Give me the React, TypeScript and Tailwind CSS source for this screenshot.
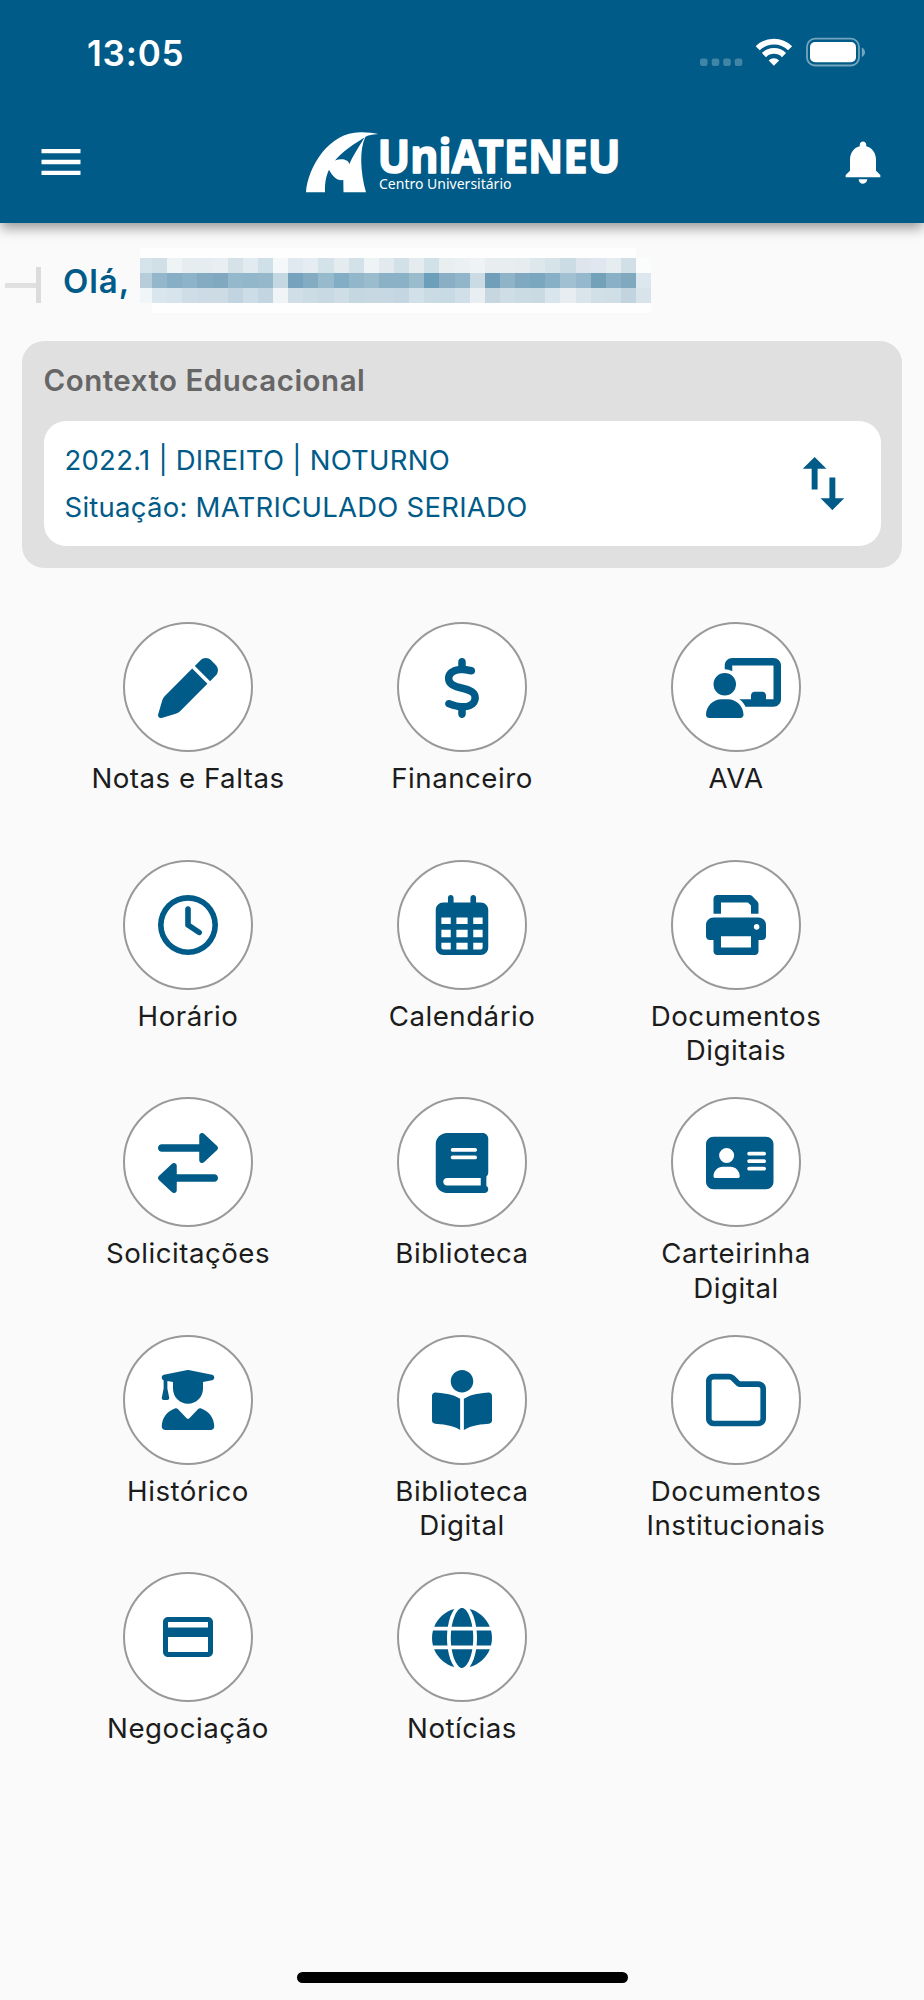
import type { ReactNode } from "react";
import {
  FaAddressCard,
  FaChalkboardUser,
  FaDollarSign,
  FaGlobe,
  FaPen,
  FaRegCalendarDays,
  FaRegClock,
  FaRegFolder,
  FaUserGraduate,
} from "react-icons/fa6";
import { MdMenu, MdNotifications, MdSwapVert } from "react-icons/md";

type IconProps = { className?: string };

function PrintIcon({ className }: IconProps) {
  return (
    <svg className={className} viewBox="0 0 512 512" fill="currentColor">
      <path d="M448 192H64C28.65 192 0 220.7 0 256v96c0 17.67 14.33 32 32 32h32v96c0 17.67 14.33 32 32 32h320c17.67 0 32-14.33 32-32v-96h32c17.67 0 32-14.33 32-32V256C512 220.7 483.3 192 448 192zM384 448H128v-96h256V448zM432 296c-13.25 0-24-10.75-24-24c0-13.27 10.75-24 24-24s24 10.73 24 24C456 285.3 445.3 296 432 296zM128 64h229.5L384 90.51V160h64V77.25c0-8.484-3.375-16.62-9.375-22.62l-45.25-45.25C387.4 3.375 379.2 0 370.8 0H96C78.34 0 64 14.33 64 32v128h64V64z" />
    </svg>
  );
}

function SwapIcon({ className }: IconProps) {
  return (
    <svg className={className} viewBox="0 0 512 512" fill="currentColor">
      <path d="M32 160h319.9l.08 72c0 9.55 5.65 18.19 14.41 22c8.75 3.81 18.93 2.08 25.93-4.41l112-104c10.24-9.5 10.24-25.69 0-35.19l-112-104c-6.99-6.48-17.17-8.22-25.93-4.41c-8.76 3.82-14.41 12.46-14.41 22L351.9 96H32C14.31 96 0 110.3 0 128S14.31 160 32 160z" />
      <path d="M480 352H160.1L160 280c0-9.55-5.65-18.19-14.41-22c-8.75-3.81-18.93-2.08-25.93 4.41l-112 104c-10.24 9.5-10.24 25.69 0 35.19l112 104c6.99 6.48 17.17 8.22 25.93 4.41C154.4 506.2 160 497.5 160 488L160.1 416H480c17.69 0 32-14.31 32-32S497.7 352 480 352z" />
    </svg>
  );
}

function BookIcon({ className }: IconProps) {
  return (
    <svg className={className} viewBox="0 0 448 512" fill="currentColor">
      <path d="M448 336v-288C448 21.49 426.5 0 400 0H96C42.98 0 0 42.98 0 96v320c0 53.02 42.98 96 96 96h320c17.67 0 32-14.33 32-32c0-11.72-6.61-21.52-16-27.1v-81.36C441.8 362.8 448 350.2 448 336zM144 128h192C344.8 128 352 135.2 352 144C352 152.8 344.8 160 336 160H144C135.2 160 128 152.8 128 144C128 135.2 135.2 128 144 128zM144 192h192C344.8 192 352 199.2 352 208C352 216.8 344.8 224 336 224H144C135.2 224 128 216.8 128 208C128 199.2 135.2 192 144 192zM384 448H96c-17.67 0-32-14.33-32-32c0-17.67 14.33-32 32-32h288V448z" />
    </svg>
  );
}

function ReaderIcon({ className }: IconProps) {
  return (
    <svg className={className} viewBox="0 0 512 512" fill="currentColor">
      <path d="M0 219.2v212.5c0 14.25 11.62 26.25 26.5 27C75.32 461.2 180.2 471.3 240 511.9V245.2C181.4 205.5 79.99 194.8 29.84 192C13.59 191.1 0 203.6 0 219.2zM482.2 192c-50.09 2.85-151.3 13.47-209.1 53.09C272.1 245.2 272 245.3 272 245.5v266.5c60.04-40.39 164.7-50.76 213.5-53.28C500.4 457.9 512 445.9 512 431.7V219.2C512 203.6 498.4 191.1 482.2 192zM352 96c0-53-43-96-96-96S160 43 160 96s43 96 96 96S352 149 352 96z" />
    </svg>
  );
}

function CardIcon({ className }: IconProps) {
  return (
    <svg className={className} viewBox="0 0 24 24" fill="currentColor">
      <path d="M20 4H4c-1.11 0-1.99.89-1.99 2L2 18c0 1.11.89 2 2 2h16c1.11 0 2-.89 2-2V6c0-1.11-.89-2-2-2zm0 14H4v-6h16v6zm0-9.8H4V6h16v2.2z" />
    </svg>
  );
}

const items = [
  { label: "Notas e Faltas", icon: <FaPen className="size-[60px]" /> },
  { label: "Financeiro", icon: <FaDollarSign className="size-[60px]" /> },
  { label: "AVA", icon: <FaChalkboardUser className="h-[60px] w-[75px] shrink-0" /> },
  { label: "Horário", icon: <FaRegClock className="size-[60px]" /> },
  { label: "Calendário", icon: <FaRegCalendarDays className="size-[60px]" /> },
  { label: "Documentos Digitais", icon: <PrintIcon className="size-[60px]" /> },
  { label: "Solicitações", icon: <SwapIcon className="size-[60px]" /> },
  { label: "Biblioteca", icon: <BookIcon className="size-[60px]" /> },
  { label: "Carteirinha Digital", icon: <FaAddressCard className="h-[60px] w-[67.5px] shrink-0" /> },
  { label: "Histórico", icon: <FaUserGraduate className="size-[60px]" /> },
  { label: "Biblioteca Digital", icon: <ReaderIcon className="size-[60px]" /> },
  { label: "Documentos Institucionais", icon: <FaRegFolder className="size-[60px]" /> },
  { label: "Negociação", icon: <CardIcon className="-mt-[2px] size-[60px]" /> },
  { label: "Notícias", icon: <FaGlobe className="size-[60px]" /> },
];

// rows of the blurred user name, top to bottom
const nameRows = [
  "#d5e3ea #d1e0e7 #eef3f5 #e5edf1 #e5edf1 #e8eef1 #d5e3e9 #e2ebef #d0e0e8 #f5f8f8 #e0e9ef #e5ecf2 #d4e2e9 #e5ecf0 #d3e1e8 #eef3f5 #e2eaef #d2e1e8 #e5ecef #d0e1e8 #e9eff1 #ebf0f2 #eff3f5 #e8eef0 #e8eef0 #e7edef #dce8ec #d6e4e9 #cbdce5 #dee5ed #e0e7f0 #e6edf1 #d1e0e7 #fafdfc",
  "#b7cdda #94b7cc #86aec4 #8db3c8 #84abc2 #80a8c0 #94b8cc #92b7cb #95b8cb #c4d8e2 #75a3bd #83abc2 #98bacd #83adc4 #92b6ca #9bbccd #8ab1c6 #8bb1c6 #9bbccd #6c9fba #8aafc5 #91b5c9 #cbdbe4 #719eb8 #8fb3c7 #80a9c1 #7aa6be #87afc5 #a1c0d2 #96b8cc #73a1ba #8ab0c6 #80a9c0 #dce8ed",
  "#f0f5f7 #dae6ed #d8e4eb #cedde6 #ccdbe5 #ccdbe4 #c1d4e0 #cddde7 #c2d5e0 #f0f4f6 #d0dfe7 #ccdce5 #c8d9e3 #cedde6 #c5d7e1 #c8d8e2 #c8d8e2 #c4d6e1 #d2e0e9 #cbdbe4 #c8dae4 #d0dfe8 #e8eef1 #c6d7e2 #cedde6 #cbdbe4 #c9dae3 #d9e5ec #e7edf1 #dae5eb #d1dfe7 #cfdee7 #c1d4e0 #d8e4ea",
];

function StatusBar() {
  return (
    <div className="flex h-[104px] items-center justify-between pr-[59px] pl-[87px] text-white">
      <span className="pt-[2px] text-[35px] font-semibold tracking-[0.8px]">13:05</span>
      <svg className="h-[30px] w-[166px]" viewBox="699 37 166 30" fill="currentColor">
        <g opacity="0.25">
          <rect x="700" y="58.4" width="7.6" height="7.6" rx="2.2" />
          <rect x="711.7" y="58.4" width="7.6" height="7.6" rx="2.2" />
          <rect x="723.2" y="58.4" width="7.6" height="7.6" rx="2.2" />
          <rect x="734.7" y="58.4" width="7.6" height="7.6" rx="2.2" />
        </g>
        <g fill="none" stroke="currentColor" strokeWidth="5.8">
          <path d="M757.7 48.3a23 23 0 0 1 32.4 0" />
          <path d="M764 55.1a14 14 0 0 1 20 0" />
        </g>
        <path d="M773.9 65.7l-5.2-5.3a7.4 7.4 0 0 1 10.4 0z" />
        <rect x="807" y="38.7" width="52" height="26.8" rx="8" fill="none" stroke="currentColor" strokeWidth="1.8" opacity="0.45" />
        <rect x="810" y="42" width="46" height="20.3" rx="5" />
        <path d="M861.8 47.5v9.4c2-.9 3.2-2.6 3.2-4.7s-1.2-3.8-3.2-4.7z" opacity="0.45" />
      </svg>
    </div>
  );
}

function Logo() {
  return (
    <svg className="h-[110px] w-[324px] overflow-visible" viewBox="300 107 324 110" fill="#fff">
      <path
        fillRule="evenodd"
        d="M306 192.3C308 166 330 131 362 132.3c6 .2 11 .6 16.3 1.6-7 .7-11.3 1.5-13 3-6 13-5 35 .7 55.4H343.5l-.2-12.3c-6.5 1-10.5-3.5-14.3-10.3-3.5 7-4.2 15-4 22.6zM364.5 137.5C355.5 143 342 151.5 335 160.5c6-2.500 13-1.500 14.500 3.500 3-7.500 9-16.500 15-26.500z"
      />
      <text x="377.5" y="172.8" fontFamily="Noto Sans, sans-serif" fontWeight="700" fontSize="46" textLength="243" lengthAdjust="spacingAndGlyphs" stroke="#fff" strokeWidth="1.6" strokeLinejoin="round">
        UniATENEU
      </text>
      <text x="379" y="189.3" fontFamily="Noto Sans, sans-serif" fontSize="14.2" textLength="132.5" lengthAdjust="spacingAndGlyphs">
        Centro Universitário
      </text>
    </svg>
  );
}

function Greeting() {
  return (
    <div className="flex h-[65px] items-center">
      <div className="mt-[9px] ml-[5px] flex items-center">
        <div className="h-[5px] w-[31px] bg-[#e0e0e0]"></div>
        <div className="h-9 w-[5px] bg-[#dcdcdc]"></div>
      </div>
      <p className="ml-[22px] w-[77px] pt-[3px] text-[33px] font-semibold tracking-[0.9px] text-[#005b88]">Olá,</p>
      <div className="flex w-[511px] flex-col">
        <div className="mr-[15px] h-[10px] bg-[#fefefe]"></div>
        {nameRows.map((row, i) => (
          <div key={i} className="flex h-[15px]">
            {row.split(" ").map((color, j) => (
              <div key={j} className={j === 0 ? "w-3 shrink-0" : "flex-1"} style={{ background: color }}></div>
            ))}
          </div>
        ))}
        <div className="ml-3 h-[10px] bg-[#fefefe]"></div>
      </div>
    </div>
  );
}

function MenuItem({ label, children }: { label: string; children: ReactNode }) {
  return (
    <div className="flex flex-col items-center">
      <div className="flex size-[130px] items-center justify-center rounded-full border-2 border-[#999] bg-white">
        {/* wide icons start at the same left edge and run over on the right */}
        <div className="mt-px flex w-[60px] text-[#005b88]">{children}</div>
      </div>
      <p className="mt-[9px] w-[200px] text-center text-[27.7px] leading-[34.7px] tracking-[0.5px] text-[#1c1c1c]">
        {label}
      </p>
    </div>
  );
}

export default function App() {
  return (
    <div className="flex h-[2000px] w-[924px] flex-col overflow-hidden bg-[#fafafa] font-['Inter',sans-serif]">
      <header className="h-[223px] shrink-0 bg-[#005b88] shadow-[0_6px_12px_-1px_rgba(0,0,0,0.4)]">
        <StatusBar />
        <div className="flex h-[116px] items-center justify-between px-[35px] text-white">
          <MdMenu className="size-[52px]" />
          <Logo />
          <MdNotifications className="size-[52px]" />
        </div>
      </header>

      <main className="flex flex-1 flex-col pt-[25px]">
        <Greeting />

        <section className="mx-[22px] mt-[28px] h-[227px] rounded-[22px] bg-[#e0e0e0] px-[21.5px] pt-[19px]">
          <h2 className="h-[61px] text-[29.5px] leading-[41px] font-semibold tracking-[0.5px] text-[#666]">
            Contexto Educacional
          </h2>
          <div className="flex h-[125px] items-center justify-between rounded-[22px] bg-white pr-[22px] pl-[21px] text-[#005b88]">
            <div className="text-[27.5px] leading-[47px] tracking-[0.25px]">
              <p>2022.1 | DIREITO | NOTURNO</p>
              <p>Situação: MATRICULADO SERIADO</p>
            </div>
            <MdSwapVert className="size-[71px]" />
          </div>
        </section>

        <section className="mt-[54px] grid auto-rows-[237.5px] grid-cols-3 px-[51px]">
          {items.map(({ label, icon }) => (
            <MenuItem key={label} label={label}>
              {icon}
            </MenuItem>
          ))}
        </section>
      </main>

      <div className="mx-auto mb-[17px] h-[11px] w-[331px] shrink-0 rounded-full bg-black"></div>
    </div>
  );
}
